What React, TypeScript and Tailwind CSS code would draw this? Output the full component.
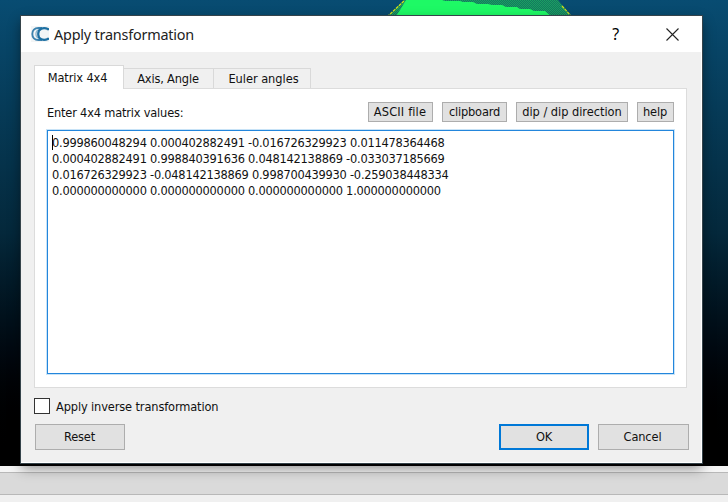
import type { ReactNode } from "react";

const matrix = [
  "0.999860048294 0.000402882491 -0.016726329923 0.011478364468",
  "0.000402882491 0.998840391636 0.048142138869 -0.033037185669",
  "0.016726329923 -0.048142138869 0.998700439930 -0.259038448334",
  "0.000000000000 0.000000000000 0.000000000000 1.000000000000",
];

function PointCloud() {
  return (
    <svg className="absolute left-[380px] top-0" width="200" height="17" viewBox="0 0 200 17">
      <defs>
        <pattern id="dither" width="2" height="2" patternUnits="userSpaceOnUse">
          <rect width="2" height="2" fill="#147a5e" />
          <rect width="1" height="1" fill="#1b9f63" />
          <rect x="1" y="1" width="1" height="1" fill="#1b9f63" />
        </pattern>
      </defs>
      <path d="M24 0H178L191 16H8Z" fill="url(#dither)" />
      <path d="M26 0H62L65 1H80L83 2H93L97 4H108L112 5H122L126 7H137L140 9H150L154 11H165L171 16H16L20 10Z" fill="#1ef965" />
      <path d="M24 1L8 16M182 6L191 16" stroke="#d5df16" strokeWidth="1.2" strokeDasharray="3 1" fill="none" />
    </svg>
  );
}

function Logo() {
  return (
    <svg width="18" height="16" viewBox="0 0 18 16" fill="none">
      <rect width="18" height="16" fill="#f3f5f6" />
      <path d="M11 2H7.500C3.500 2 1.300 4.500 1.300 8S3.500 14 7.500 14H11" stroke="#3c82af" strokeWidth="1.900" />
      <path d="M9 3.600C3.600 4 3.600 12 9 12.400" stroke="#8ab5cf" strokeWidth="1.300" />
      <path d="M17 4.200V3.100C12.500 1.200 7.200 2.400 7.200 8S12.500 14.800 17 12.900V11.800" stroke="#1d6fa2" strokeWidth="2.200" />
    </svg>
  );
}

function ToolButton({ className, children }: { className: string; children: ReactNode }) {
  return (
    <button className={`flex h-5 items-center justify-center whitespace-nowrap border border-[#adadad] bg-[#e1e1e1] ${className}`}>
      {children}
    </button>
  );
}

export default function App() {
  return (
    <div className="relative flex h-[502px] w-[728px] flex-col overflow-hidden bg-[#f0f0f0] font-['DejaVu_Sans_Condensed','DejaVu_Sans',sans-serif] text-[12.7px] leading-4 tracking-[-0.13px] text-[#111] [font-stretch:condensed]">
      <div className="h-[466px] shrink-0 bg-linear-to-b from-[#084c72] via-[#04283b] to-black" />
      <div className="h-[6px] shrink-0 bg-[#f5f5f5]" />
      <div className="h-[23px] shrink-0 border-y border-[#b8b8b8] bg-[#dadada]" />
      <PointCloud />

      <div className="absolute left-[21px] top-[16px] flex h-[447px] w-[681px] flex-col border-b border-r border-white bg-[#f0f0f0] shadow-[0_0_0_1px_#35434a,0_5px_12px_rgba(0,0,0,0.45)]">
        <header className="flex h-9 shrink-0 items-center bg-white pl-[10px] pr-[22px]">
          <Logo />
          <h1 className="ml-[5px] flex-1 pt-px font-['Noto_Sans','Open_Sans',sans-serif] text-[14.4px] tracking-[-0.2px] text-[#222]">Apply transformation</h1>
          <span className="mr-[47px] font-['Noto_Sans',sans-serif] text-[16px] text-black">?</span>
          <svg width="13" height="13" viewBox="0 0 13 13" stroke="#222" strokeWidth="1.1">
            <path d="M.5.5l12 12M12.500.5l-12 12" />
          </svg>
        </header>

        <main className="flex flex-1 flex-col pl-[13px] pr-[13px] pt-[13px]">
          <nav className="flex h-[23px] shrink-0 items-end">
            <button className="z-10 -mb-px h-6 w-[90px] border border-b-0 border-[#d9d9d9] bg-white pr-[3px] pt-px">Matrix 4x4</button>
            <button className="h-5 w-[90px] border border-b-0 border-l-0 border-[#d9d9d9] pr-px tracking-[-0.17px]">Axis, Angle</button>
            <button className="h-5 w-[97px] border border-b-0 border-l-0 border-[#d9d9d9] pl-[3px] tracking-[-0.03px]">Euler angles</button>
          </nav>
          <section className="h-[300px] w-[653px] shrink-0 border border-[#dcdcdc] bg-white px-[12px] pt-[13px]">
            <div className="flex h-5 items-center">
              <span className="flex-1 pt-px tracking-[-0.19px]">Enter 4x4 matrix values:</span>
              <div className="flex gap-[9px]">
                <ToolButton className="w-[65px] pr-px tracking-[0.15px]">ASCII file</ToolButton>
                <ToolButton className="w-[65px] tracking-[-0.2px]">clipboard</ToolButton>
                <ToolButton className="w-[112px] tracking-[-0.03px]">dip / dip direction</ToolButton>
                <ToolButton className="w-[37px] pr-px">help</ToolButton>
              </div>
            </div>
            <div className="mt-[8px] h-[244px] w-[627px] whitespace-pre border border-[#2386dc] px-[4px] pt-[4px] tracking-[-0.24px] shadow-[0_0_0_1px_#c8e3f7]">
              <div className="relative">
                <span className="absolute left-0 top-0 h-[15px] w-px bg-black" />
                {matrix.map((row) => (
                  <div key={row} className="h-4">{row}</div>
                ))}
              </div>
            </div>
          </section>

          <label className="mt-[10px] flex h-4 shrink-0 items-center">
            <span className="mr-[6px] h-4 w-4 border border-[#333] bg-white" />
            <span className="pt-px">Apply inverse transformation</span>
          </label>
          <footer className="mt-[10px] flex h-[26px] w-[655px] shrink-0 pl-px">
            <button className="w-[90px] border border-[#adadad] bg-[#e1e1e1] pr-px">Reset</button>
            <button className="ml-auto w-[90px] border-2 border-[#0078d7] bg-[#e1e1e1]">OK</button>
            <button className="ml-[9px] w-[91px] border border-[#adadad] bg-[#e1e1e1] pr-[2px]">Cancel</button>
          </footer>
        </main>
      </div>
    </div>
  );
}
